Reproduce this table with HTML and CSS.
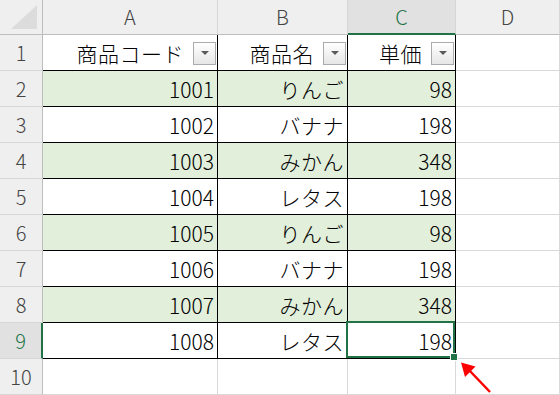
FILE: index.html
```html
<!DOCTYPE html>
<html lang="ja">
<head>
<meta charset="utf-8">
<link rel="stylesheet" href="styles.css">
</head>
<body>
<div class="sheet">
  <div class="corner"><svg class="corner-tri" width="30" height="28" viewBox="0 0 30 28"><polygon points="2,26 28,26 28,2" fill="#dcdcdc"/></svg></div>
  <div class="colhead">A</div>
  <div class="colhead">B</div>
  <div class="colhead sel">C</div>
  <div class="colhead">D</div>

  <div class="rowhead">1</div>
  <div class="cell t head"><span class="jp">商品コード</span><span class="filter"></span></div>
  <div class="cell t head"><span class="jp">商品名</span><span class="filter"></span></div>
  <div class="cell t head"><span class="jp">単価</span><span class="filter"></span></div>
  <div class="cell"></div>

  <div class="rowhead">2</div>
  <div class="cell t g">1001</div>
  <div class="cell t g jp">りんご</div>
  <div class="cell t g">98</div>
  <div class="cell"></div>

  <div class="rowhead">3</div>
  <div class="cell t">1002</div>
  <div class="cell t jp">バナナ</div>
  <div class="cell t">198</div>
  <div class="cell"></div>

  <div class="rowhead">4</div>
  <div class="cell t g">1003</div>
  <div class="cell t g jp">みかん</div>
  <div class="cell t g">348</div>
  <div class="cell"></div>

  <div class="rowhead">5</div>
  <div class="cell t">1004</div>
  <div class="cell t jp">レタス</div>
  <div class="cell t">198</div>
  <div class="cell"></div>

  <div class="rowhead">6</div>
  <div class="cell t g">1005</div>
  <div class="cell t g jp">りんご</div>
  <div class="cell t g">98</div>
  <div class="cell"></div>

  <div class="rowhead">7</div>
  <div class="cell t">1006</div>
  <div class="cell t jp">バナナ</div>
  <div class="cell t">198</div>
  <div class="cell"></div>

  <div class="rowhead">8</div>
  <div class="cell t g">1007</div>
  <div class="cell t g jp">みかん</div>
  <div class="cell t g">348</div>
  <div class="cell"></div>

  <div class="rowhead sel">9</div>
  <div class="cell t">1008</div>
  <div class="cell t jp">レタス</div>
  <div class="cell t active">198<span class="handle"></span></div>
  <div class="cell"></div>

  <div class="rowhead">10</div>
  <div class="cell"></div>
  <div class="cell"></div>
  <div class="cell"></div>
  <div class="cell"></div>
</div>
<svg class="arrow" width="560" height="395" viewBox="0 0 560 395">
  <line x1="490" y1="392" x2="469" y2="370" stroke="#ff0000" stroke-width="2.5"/>
  <polygon points="461,362.5 475.5,366.5 465,377" fill="#ff0000"/>
</svg>
</body>
</html>
```

FILE: styles.css
```css
html, body {
  margin: 0;
  padding: 0;
  background: #ffffff;
}
body {
  width: 560px;
  height: 395px;
  overflow: hidden;
  position: relative;
  font-family: "Noto Sans CJK JP", "Noto Sans", sans-serif;
}
.sheet {
  display: grid;
  grid-template-columns: 43px 175px 130px 108px 104px;
  grid-template-rows: 35px repeat(10, 36px);
}
.sheet > div {
  box-sizing: border-box;
}
.corner {
  background: #efefef;
  border-right: 1px solid #bdbdbd;
  border-bottom: 1px solid #bdbdbd;
  position: relative;
}
.corner-tri {
  position: absolute;
  left: 9px;
  top: 3px;
}
.colhead {
  background: #efefef;
  border-right: 1px solid #d6d6d6;
  border-bottom: 1px solid #bdbdbd;
  display: flex;
  align-items: center;
  justify-content: center;
  font-size: 20px;
  font-weight: 300;
  color: #444444;
  padding-bottom: 1px;
}
.colhead.sel {
  background: #e1e1e1;
  color: #217346;
  border-bottom: 2px solid #217346;
}
.rowhead {
  background: #efefef;
  border-right: 1px solid #bdbdbd;
  border-bottom: 1px solid #d6d6d6;
  display: flex;
  align-items: center;
  justify-content: center;
  font-size: 20px;
  font-weight: 300;
  color: #444444;
}
.rowhead.sel {
  background: #e1e1e1;
  color: #217346;
  border-right: 2px solid #217346;
}
.cell {
  border-right: 1px solid #d9d9d9;
  border-bottom: 1px solid #d9d9d9;
  display: flex;
  align-items: center;
  justify-content: flex-end;
  padding-right: 3px;
  font-size: 21px;
  font-weight: 300;
  color: #000000;
  background: #ffffff;
}
.jp {
  letter-spacing: 0.5px;
}
.cell.t {
  border-right-color: #000000;
  border-bottom-color: #000000;
}
.cell.g {
  background: #e2efda;
}
.cell.head {
  padding-right: 1px;
  gap: 9px;
}
.filter {
  width: 23px;
  height: 23px;
  box-sizing: border-box;
  border: 1px solid #ababab;
  background: linear-gradient(#ffffff, #e6e6e6);
  display: flex;
  align-items: center;
  justify-content: center;
  margin-top: 1px;
}
.filter::after {
  content: "";
  display: block;
  width: 0;
  height: 0;
  border-left: 4px solid transparent;
  border-right: 4px solid transparent;
  border-top: 4px solid #5a5a5a;
}
.active {
  position: relative;
}
.active::before {
  content: "";
  position: absolute;
  left: -2px;
  top: -2px;
  right: 0;
  bottom: 0;
  border: 2px solid #217346;
}
.handle {
  position: absolute;
  right: -3px;
  bottom: -3px;
  width: 6px;
  height: 6px;
  background: #217346;
  border: 1px solid #ffffff;
}
.arrow {
  position: absolute;
  left: 0;
  top: 0;
  pointer-events: none;
}
```
